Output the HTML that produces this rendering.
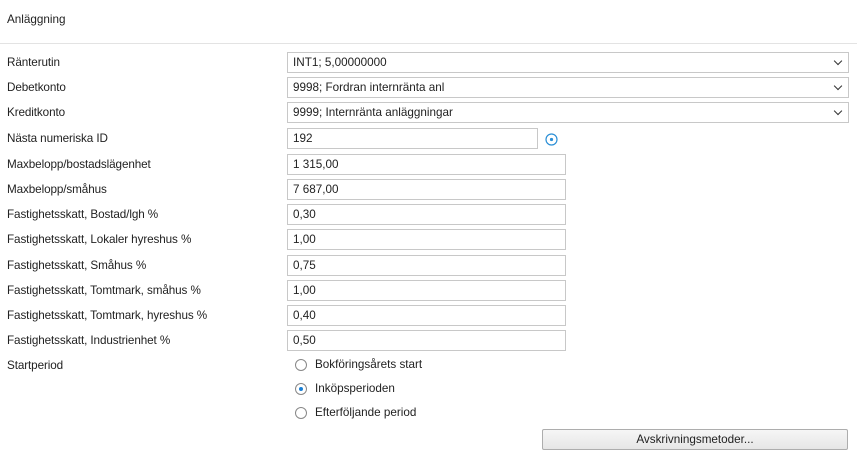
<!DOCTYPE html>
<html><head><style>
body{margin:0;width:857px;height:453px;background:#fff;font-family:"Liberation Sans",sans-serif;font-size:11.7px;color:#222;position:relative;overflow:hidden}
.a{position:absolute;white-space:nowrap}
.hdr{left:7px;top:13px}
.line{left:0;top:43px;width:857px;height:1px;background:#e3e3e3}
.lbl{left:7px;letter-spacing:-0.1px}
.box{position:absolute;left:287px;border:1px solid #c8c8c8;box-sizing:border-box;height:21px;padding:3px 0 0 5px;background:#fff}
.dd{width:562px}
.dd:after{content:"";position:absolute;right:7px;top:5px;width:5px;height:5px;border-right:1.3px solid #333;border-bottom:1.3px solid #333;transform:rotate(45deg)}
.in{width:279px}
.rad{position:absolute;left:295px;width:12px;height:12px;border:1px solid #888;border-radius:50%;box-sizing:border-box}
.btn{position:absolute;left:542px;top:429px;width:306px;height:21px;box-sizing:border-box;border:1px solid #adadad;border-radius:2px;background:linear-gradient(#f6f6f6,#e6e6e6);text-align:center;line-height:19px}
</style></head><body>
<div class="a hdr">Anläggning</div>
<div class="a line"></div>
<div class="a lbl" style="top:56px">Ränterutin</div>
<div class="a lbl" style="top:81px">Debetkonto</div>
<div class="a lbl" style="top:106px">Kreditkonto</div>
<div class="a lbl" style="top:132px">Nästa numeriska ID</div>
<div class="a lbl" style="top:158px">Maxbelopp/bostadslägenhet</div>
<div class="a lbl" style="top:183px">Maxbelopp/småhus</div>
<div class="a lbl" style="top:208px">Fastighetsskatt, Bostad/lgh %</div>
<div class="a lbl" style="top:233px">Fastighetsskatt, Lokaler hyreshus %</div>
<div class="a lbl" style="top:259px">Fastighetsskatt, Småhus %</div>
<div class="a lbl" style="top:284px">Fastighetsskatt, Tomtmark, småhus %</div>
<div class="a lbl" style="top:309px">Fastighetsskatt, Tomtmark, hyreshus %</div>
<div class="a lbl" style="top:334px">Fastighetsskatt, Industrienhet %</div>
<div class="a lbl" style="top:359px">Startperiod</div>

<div class="box dd" style="top:52px">INT1; 5,00000000</div>
<div class="box dd" style="top:77px">9998; Fordran internränta anl</div>
<div class="box dd" style="top:102px">9999; Internränta anläggningar</div>
<div class="box" style="top:128px;width:251px">192</div>
<svg class="a" style="left:545px;top:133px" width="13" height="13"><circle cx="6.5" cy="6.5" r="5.5" fill="none" stroke="#2b8fd6" stroke-width="1.2"/><circle cx="6.5" cy="6.5" r="1.6" fill="#2b8fd6"/></svg>
<div class="box in" style="top:154px">1 315,00</div>
<div class="box in" style="top:179px">7 687,00</div>
<div class="box in" style="top:204px">0,30</div>
<div class="box in" style="top:229px">1,00</div>
<div class="box in" style="top:255px">0,75</div>
<div class="box in" style="top:280px">1,00</div>
<div class="box in" style="top:305px">0,40</div>
<div class="box in" style="top:330px">0,50</div>

<div class="rad" style="top:359px"></div><div class="a" style="left:315px;top:358px">Bokföringsårets start</div>
<div class="rad" style="top:383px"><div style="position:absolute;left:3px;top:3px;width:4px;height:4px;border-radius:50%;background:#1a7fd4"></div></div><div class="a" style="left:315px;top:382px">Inköpsperioden</div>
<div class="rad" style="top:407px"></div><div class="a" style="left:315px;top:406px">Efterföljande period</div>
<div class="btn">Avskrivningsmetoder...</div>
</body></html>
